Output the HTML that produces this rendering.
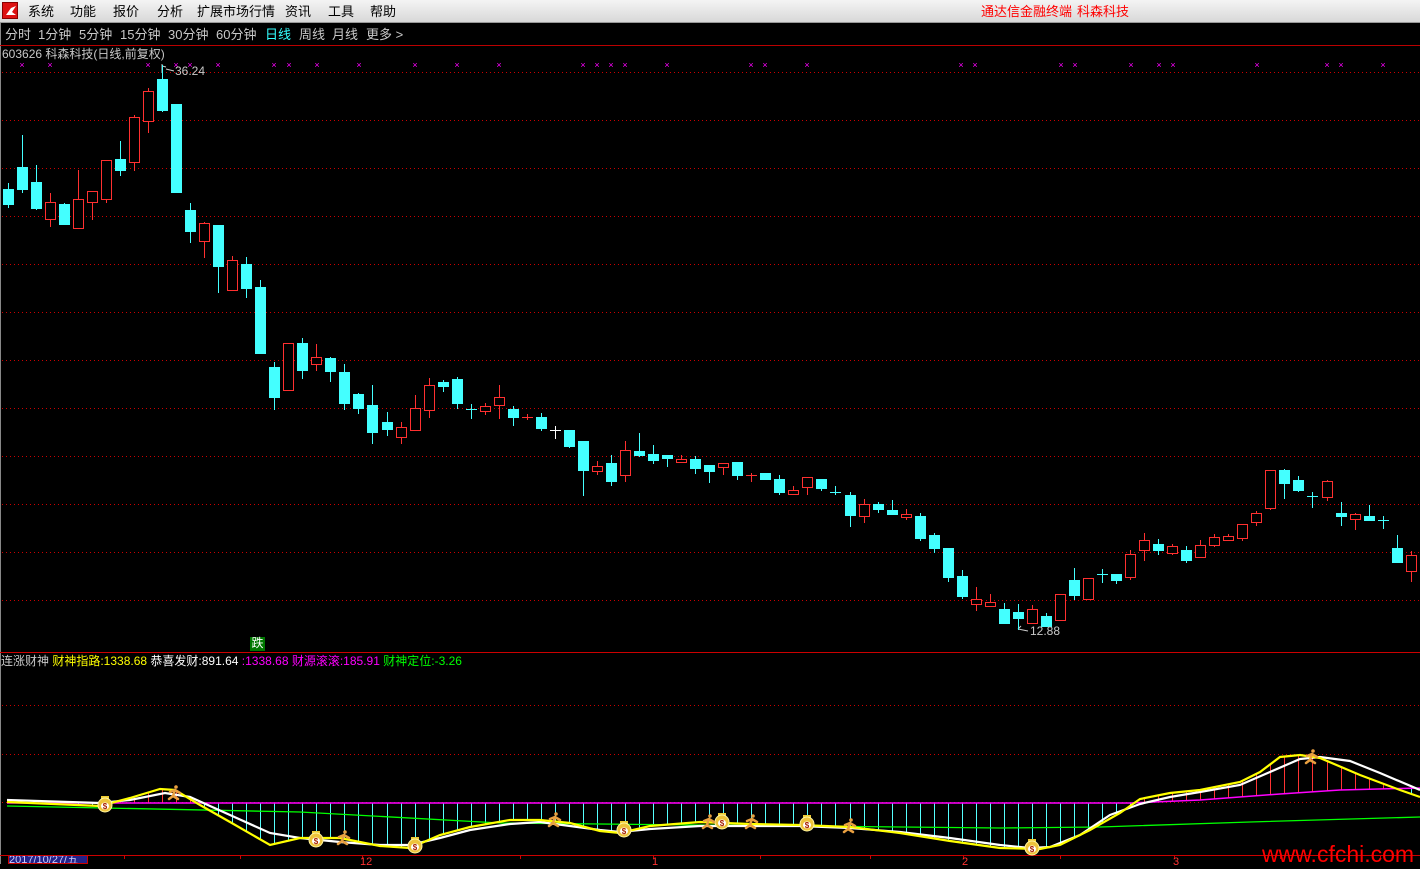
<!DOCTYPE html>
<html><head><meta charset="utf-8">
<style>
*{margin:0;padding:0;box-sizing:border-box}
body{width:1420px;height:864px;background:#000;overflow:hidden;position:relative;font-family:"Liberation Sans","Noto Sans CJK SC","WenQuanYi Zen Hei",sans-serif}
#menu{position:absolute;left:0;top:0;width:1420px;height:23px;background:linear-gradient(#f4f4f4,#d8d8d8);border-bottom:1px solid #999}
#menu span{position:absolute;top:4px;font-size:13px;color:#000;line-height:15px}
#menu .r{color:#f00}
#logo{position:absolute;left:2px;top:2px;width:16px;height:17px;background:#d11;border:1px solid #800}
#tb{position:absolute;left:0;top:23px;width:1420px;height:22px;background:#000}
#tb span{position:absolute;top:4px;font-size:13px;color:#c8c8c8;line-height:15px}
.t{position:absolute;font-size:12px;line-height:13px;white-space:nowrap}
svg{position:absolute;left:0;top:0}
</style></head><body>
<div id="menu"><div id="logo"><svg width="16" height="17"><path d="M3 12 L8 5 L13 3 L9 9 L13 12 Z" fill="#fff"/></svg></div>
<span style="left:28px">系统</span><span style="left:70px">功能</span><span style="left:113px">报价</span><span style="left:157px">分析</span><span style="left:197px">扩展市场行情</span><span style="left:285px">资讯</span><span style="left:328px">工具</span><span style="left:370px">帮助</span>
<span class="r" style="left:981px">通达信金融终端</span><span class="r" style="left:1077px">科森科技</span></div>
<div id="tb"><span style="left:5px">分时</span><span style="left:38px">1分钟</span><span style="left:79px">5分钟</span><span style="left:120px">15分钟</span><span style="left:168px">30分钟</span><span style="left:216px">60分钟</span><span style="left:265px;color:#3ff">日线</span><span style="left:299px">周线</span><span style="left:332px">月线</span><span style="left:366px">更多 &gt;</span></div>
<svg id="s" width="1420" height="864"></svg>
<div class="t" style="left:2px;top:48px;color:#c8c8c8">603626 科森科技(日线,前复权)</div>
<div class="t" style="left:175px;top:65px;color:#c8c8c8">36.24</div>
<div class="t" style="left:1030px;top:625px;color:#c8c8c8">12.88</div>
<div class="t" style="left:250px;top:637px;width:15px;height:14px;background:#070;color:#fff;text-align:center">跌</div>
<div class="t" style="left:1px;top:655px;color:#c8c8c8">连涨财神 <span style="color:#ff0">财神指路:1338.68</span> <span style="color:#fff">恭喜发财:891.64</span> <span style="color:#f0f">:1338.68 财源滚滚:185.91</span> <span style="color:#0f0">财神定位:-3.26</span></div>
<div class="t" style="left:8px;top:855px;width:80px;height:9px;background:#22228a;border:1px solid #c00;color:#ccf;font-size:11px;line-height:9px;overflow:hidden">2017/10/27/五</div>
<div class="t" style="left:360px;top:856px;color:#f33;font-size:11px">12</div>
<div class="t" style="left:652px;top:856px;color:#f33;font-size:11px">1</div>
<div class="t" style="left:962px;top:856px;color:#f33;font-size:11px">2</div>
<div class="t" style="left:1173px;top:856px;color:#f33;font-size:11px">3</div>
<div class="t" style="left:1262px;top:842px;color:#f00;font-size:23px;line-height:24px">www.cfchi.com</div>
<script>
var C=[[189,204,183,208,0],[167,189,135,193,0],[182,208,165,210,0],[202,219,193,227,1],[204,224,203,225,0],[199,228,170,228,1],[191,202,191,220,1],[160,199,160,203,1],[159,170,141,176,0],[117,162,115,171,1],[91,121,88,133,1],[79,110,65,112,0],[104,192,104,193,0],[210,231,203,243,0],[223,241,222,258,1],[225,266,225,293,0],[260,290,256,290,1],[264,288,257,298,0],[287,353,280,353,0],[367,397,362,410,0],[343,390,343,390,1],[343,370,338,379,0],[357,364,344,371,1],[358,371,357,382,0],[372,403,364,410,0],[394,408,393,414,0],[405,432,385,444,0],[422,429,412,436,0],[427,437,422,444,1],[408,430,395,430,1],[385,410,378,418,1],[382,386,380,392,0],[379,403,377,409,0],[409,409,404,419,0],[406,411,403,415,1],[397,405,385,419,1],[409,417,406,426,0],[417,417,414,420,1],[417,428,413,431,0],[430,430,426,439,2],[430,446,430,448,0],[441,470,441,496,0],[466,471,461,475,1],[463,481,455,486,0],[450,475,441,482,1],[451,455,433,457,0],[454,460,445,464,0],[455,458,455,467,0],[459,462,455,462,1],[459,468,456,474,0],[465,471,465,483,0],[463,467,463,475,1],[462,475,462,480,0],[475,475,473,482,1],[473,479,473,480,0],[479,492,475,495,0],[490,494,486,494,1],[477,487,477,495,1],[479,488,479,491,0],[492,492,486,495,0],[495,515,492,527,0],[504,516,499,523,1],[504,509,502,513,0],[510,514,500,515,0],[514,517,509,520,1],[516,538,513,541,0],[535,548,533,553,0],[548,577,548,582,0],[576,596,570,599,0],[599,604,587,611,1],[602,606,594,607,1],[609,623,603,624,0],[612,618,604,630,0],[609,623,605,623,1],[616,626,613,626,0],[594,620,594,621,1],[580,595,568,600,0],[578,599,578,599,1],[574,574,569,583,0],[574,580,574,584,0],[554,577,550,580,1],[540,550,533,561,1],[544,550,539,555,0],[546,553,544,555,1],[550,560,546,563,0],[545,557,540,558,1],[537,545,534,547,1],[536,540,534,540,1],[524,538,524,541,1],[513,522,511,526,1],[470,508,470,510,1],[470,483,469,499,0],[480,490,476,492,0],[496,496,492,508,0],[481,497,480,501,1],[513,516,502,526,0],[514,519,513,530,1],[516,520,505,521,0],[520,520,516,529,0],[548,562,535,563,0],[555,571,551,582,1]];
var h='<line x1="0.5" y1="23" x2="0.5" y2="864" stroke="#888"/>';
h+='<line x1="0" y1="45.5" x2="1420" y2="45.5" stroke="#b00"/><line x1="0" y1="652.5" x2="1420" y2="652.5" stroke="#c00"/><line x1="0" y1="855.5" x2="1420" y2="855.5" stroke="#c00"/>';
for(var y=72.5;y<610;y+=48)h+='<line x1="2" y1="'+y+'" x2="1420" y2="'+y+'" stroke="#c00" stroke-dasharray="1 3"/>';
[705.5,754.5,802.5].forEach(function(y){h+='<line x1="2" y1="'+y+'" x2="1420" y2="'+y+'" stroke="#c00" stroke-dasharray="1 3"/>'});
[124,240,362,520,653,760,870,963,1060,1174,1280,1380].forEach(function(x){h+='<line x1="'+x+'.5" y1="855" x2="'+x+'.5" y2="859" stroke="#c00"/>'});
[22,50,148,176,190,218,274,289,317,359,415,457,499,583,597,611,625,667,751,765,807,961,975,1061,1075,1131,1159,1173,1257,1327,1341,1383].forEach(function(x){h+='<text x="'+x+'" y="68" fill="#f0f" font-size="9" text-anchor="middle" font-family="Liberation Sans">×</text>'});
h+='<path d="M162 64V73M162 66L166 67 M166 69L174 71" stroke="#ccc" fill="none"/><path d="M1018 629L1028 631 M1018 629L1021 626" stroke="#ccc" fill="none"/>';
C.forEach(function(c,i){var x=Math.round(7.7+14.03*i);var col=c[4]==1?'#ff3030':(c[4]==2?'#fff':'#4ff');
h+='<line x1="'+(x+.5)+'" y1="'+c[2]+'" x2="'+(x+.5)+'" y2="'+c[3]+'" stroke="'+col+'"/>';
if(c[1]-c[0]<1)h+='<line x1="'+(x-5)+'" y1="'+(c[0]+.5)+'" x2="'+(x+6)+'" y2="'+(c[0]+.5)+'" stroke="'+col+'"/>';
else if(c[4]==1)h+='<rect x="'+(x-4.5)+'" y="'+(c[0]+.5)+'" width="10" height="'+(c[1]-c[0])+'" fill="#000" stroke="'+col+'"/>';
else h+='<rect x="'+(x-5)+'" y="'+c[0]+'" width="11" height="'+(c[1]-c[0]+1)+'" fill="'+col+'"/>';});
function pl(p){return p.map(function(q){return q.join(',')}).join(' ')}
var W=[[7,800],[100,803],[130,800],[165,793],[190,797],[230,815],[270,833],[300,838],[340,842],[380,845],[410,845],[440,838],[470,830],[510,824],[540,822],[570,826],[600,830],[620,832],[650,829],[700,826],[750,826],[800,826],[850,828],[900,832],[950,838],[1000,845],[1030,848],[1050,847],[1080,835],[1110,815],[1140,804],[1170,797],[1200,792],[1240,785],[1270,772],[1300,759],[1320,757],[1350,761],[1380,773],[1420,790]];
var Y=[[7,802],[100,806],[130,798],[160,789],[175,790],[200,805],[230,822],[270,845],[300,838],[340,838],[380,846],[410,848],[440,835],[470,827],[510,820],[540,820],[570,823],[600,831],[620,833],[650,826],[700,822],[750,824],[800,825],[850,827],[900,833],[950,841],[1000,848],[1040,849],[1060,845],[1090,830],[1120,813],[1140,799],[1170,793],[1200,790],[1240,782],[1260,772],[1280,757],[1300,755],[1320,758],[1360,775],[1400,790],[1420,797]];
var M=[[7,803],[1130,803],[1200,800],[1280,794],[1340,790],[1420,788]];
var G=[[7,806],[300,812],[500,823],[800,826],[1000,828],[1100,827],[1250,822],[1420,817]];
function at(P,x){for(var k=1;k<P.length;k++)if(x<=P[k][0]){var a=P[k-1],b=P[k];return a[1]+(b[1]-a[1])*(x-a[0])/(b[0]-a[0])}return P[P.length-1][1]}
for(var i=0;i<101;i++){var x=Math.round(7.7+14.03*i)+.5;var m=at(M,x),y=at(Y,x);if(Math.abs(y-m)<2)continue;h+='<line x1="'+x+'" y1="'+m+'" x2="'+x+'" y2="'+y+'" stroke="'+(y>m?'#5ff':'#f33')+'"/>'}
h+='<polyline points="'+pl(G)+'" fill="none" stroke="#0f0" stroke-width="1.3"/>';
h+='<polyline points="'+pl(M)+'" fill="none" stroke="#f0f" stroke-width="1.5"/>';
h+='<polyline points="'+pl(W)+'" fill="none" stroke="#fff" stroke-width="2.2"/>';
h+='<polyline points="'+pl(Y)+'" fill="none" stroke="#ff0" stroke-width="2.2"/>';
[[105,805],[316,840],[415,846],[624,830],[722,822],[807,824],[1032,848]].forEach(function(p){h+='<g transform="translate('+p[0]+','+p[1]+')"><rect x="-4" y="-9" width="8" height="4" fill="#ec3"/><circle cx="0" cy="0" r="7" fill="#eec33a" stroke="#fff6a0"/><ellipse cx="0" cy="1" rx="4" ry="3.5" fill="#fff"/><text x="0" y="4" font-size="8" fill="#a20" text-anchor="middle" font-family="Liberation Sans" font-weight="bold">$</text></g>'});
[[175,793],[344,838],[555,820],[709,822],[752,822],[850,826],[1312,757]].forEach(function(p){h+='<g transform="translate('+p[0]+','+p[1]+')" stroke="#e9a040" stroke-width="2.5" fill="none" stroke-linecap="round"><circle cx="1" cy="-6" r="1.8" fill="#e9a040" stroke="none"/><path d="M0-3L-2 3M-2 3L-6 6M-2 3L3 6M-5-1L0-3L5 0"/></g>'});
document.getElementById('s').innerHTML=h;
</script>
</body></html>
